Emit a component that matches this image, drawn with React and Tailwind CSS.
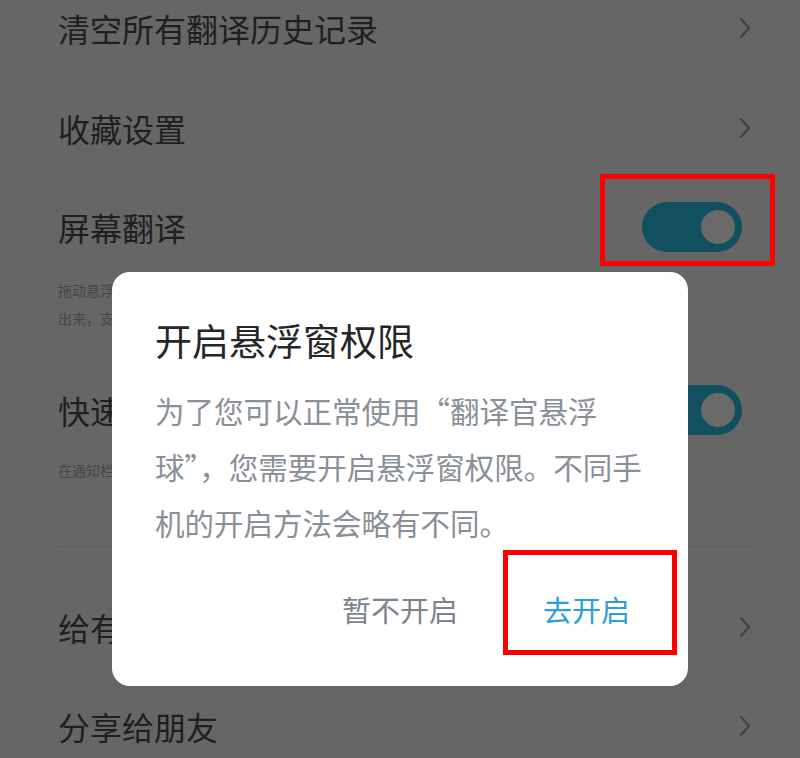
import React from "react";

const font = { fontFamily: '"Noto Sans CJK SC", "Noto Sans", sans-serif' };

function Chevron() {
  return (
    <svg width="14" height="24" viewBox="0 0 14 24" className="shrink-0">
      <path d="M3 3 L11 12 L3 21" fill="none" stroke="#3f4144" strokeWidth="2.2" strokeLinecap="round" strokeLinejoin="round" />
    </svg>
  );
}

function Toggle() {
  return (
    <div className="mr-[10px] flex h-[50px] w-[100px] items-center justify-end rounded-full bg-[#11505f] pr-[7px]">
      <div className="h-[34px] w-[34px] rounded-full bg-[#6a6a6a]" />
    </div>
  );
}

function Row({ label, right, className = "h-[100px]" }) {
  return (
    <div className={`flex items-center justify-between ${className}`}>
      <span className="text-[32px] leading-none text-[#1f1f1f]">{label}</span>
      {right}
    </div>
  );
}

export default function App() {
  return (
    <div style={font} className="relative h-[758px] w-[800px] overflow-hidden bg-[#666666]">
      <div className="-mt-[22px] flex flex-col pl-[58px] pr-[48px]">
        <Row label="清空所有翻译历史记录" right={<Chevron />} />
        <Row label="收藏设置" right={<Chevron />} />
        <Row label="屏幕翻译" right={<Toggle />} className="h-[98px]" />
        <div className="text-[14px] leading-[28px] text-[#474747]">
          <div>拖动悬浮球到需要翻译的文字上，翻译结果就会显示</div>
          <div>出来，支持多款应用</div>
        </div>
        <Row label="快速翻译" right={<Toggle />} className="mt-[50px] h-[56px]" />
        <div className="mt-[18px] text-[14px] leading-[28px] text-[#474747]">在通知栏快速开启翻译</div>
        <div className="mt-[62px] h-px bg-[#5d5d5d]" />
        <Row label="给有道翻译官评分" right={<Chevron />} className="mt-[31px] h-[98px]" />
        <Row label="分享给朋友" right={<Chevron />} />
      </div>

      {/* dialog */}
      <div className="absolute left-[112px] top-[272px] flex h-[414px] w-[576px] flex-col rounded-[18px] bg-white pl-[43px] pr-[16px] pt-[44px]">
        <div className="text-[37px] leading-[48px] text-[#262626]">开启悬浮窗权限</div>
        <div className="mt-[18px] whitespace-nowrap text-[29.5px] leading-[56px] text-[#8a9097]">
          <div>为了您可以正常使用“翻译官悬浮</div>
          <div>球”，您需要开启悬浮窗权限。不同手</div>
          <div>机的开启方法会略有不同。</div>
        </div>
        <div className="mr-[42px] mt-[30px] flex h-[60px] items-center justify-end gap-[85px] text-[29px]">
          <span className="text-[#7d848c]">暂不开启</span>
          <span className="text-[#2b9fd8]">去开启</span>
        </div>
      </div>

      {/* annotation boxes */}
      <div className="absolute left-[600px] top-[174px] h-[92px] w-[175px] border-[5px] border-[#ff0000]" />
      <div className="absolute left-[503px] top-[550px] h-[105px] w-[174px] border-[5px] border-[#ff0000]" />
    </div>
  );
}
